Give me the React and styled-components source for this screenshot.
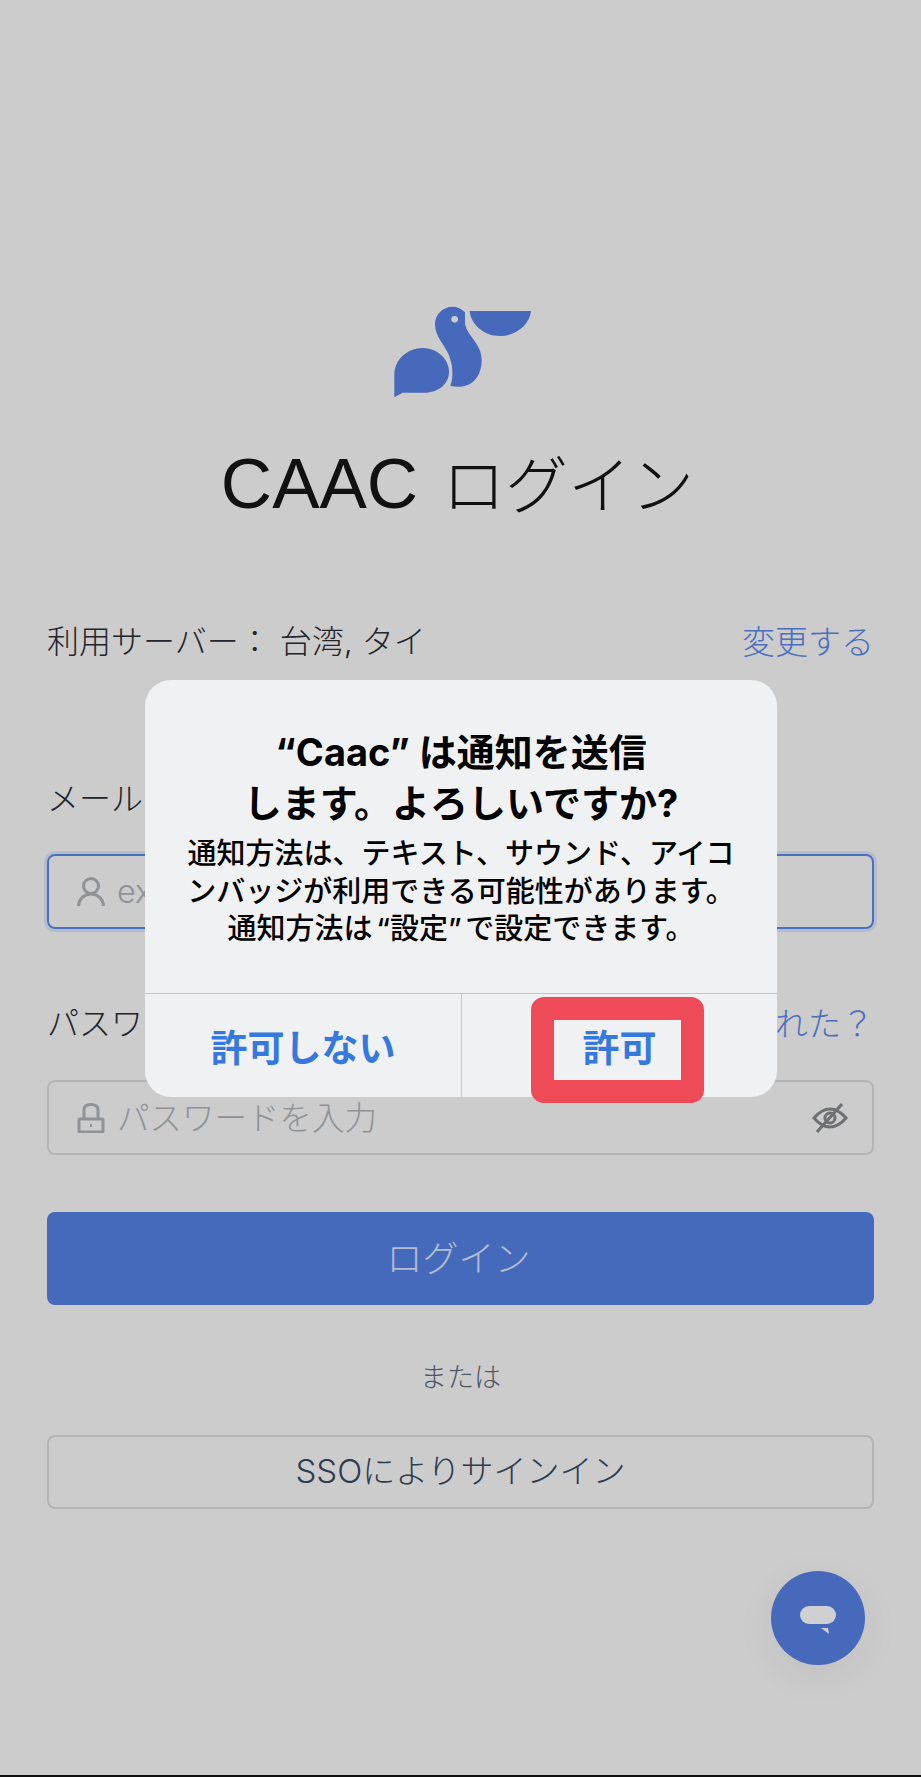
import React from "react";
import styled, { createGlobalStyle } from "styled-components";

const Global = createGlobalStyle`
  html, body { margin: 0; padding: 0; background: #cccccc; }
  * { box-sizing: border-box; }
`;

const sans = `Inter, "Noto Sans CJK JP", sans-serif`;

const Page = styled.main`
  position: relative;
  width: 921px;
  height: 1777px;
  overflow: hidden;
  background: #cccccc;
  border-bottom: 2px solid #111;
  padding: 307px 47px 0;
  font-family: ${sans};
  color: #22252b;
  display: flex;
  flex-direction: column;
`;

const Logo = styled.svg`
  width: 200px;
  height: 130px;
  align-self: center;
  margin: -27px 0 0 0;
  flex: none;
`;

const Title = styled.h1`
  margin: 38px 0 1px;
  padding-right: 6px;
  display: flex;
  justify-content: center;
  align-items: baseline;
  gap: 24px;
  height: 72px;
  font-size: 63px;
  line-height: 72px;
  font-weight: 300;
  color: #111;
  white-space: nowrap;
`;

const TitleLatin = styled.span`
  font-family: "Liberation Sans", sans-serif;
  font-size: 71px;
  font-weight: 400;
`;

const Row = styled.div`
  display: flex;
  justify-content: space-between;
  align-items: center;
  height: 44px;
  font-size: 32px;
  line-height: 44px;
  font-weight: 300;
  margin-top: ${(p) => p.$top}px;
  white-space: nowrap;
`;

const Link = styled.span`
  color: #4a6fbd;
  font-size: 33px;
`;

const Field = styled.div`
  height: 75px;
  margin-top: ${(p) => p.$top}px;
  border-radius: 8px;
  border: ${(p) => (p.$focus ? "2px solid #4a70c4" : "2px solid #b4b5b7")};
  box-shadow: ${(p) => (p.$focus ? "0 0 0 3px #b6bccb" : "none")};
  display: flex;
  align-items: center;
  padding: 0 24px 0 28px;
  gap: 12px;
  font-size: 32.5px;
  font-weight: 300;
  color: #8f9398;
`;

const FieldIcon = styled.svg`
  width: 28px;
  height: 30px;
  flex: none;
  fill: none;
  stroke: #8f9296;
  stroke-width: 3;
`;

const FieldText = styled.span`
  flex: 1;
  white-space: nowrap;
  margin-bottom: ${(p) => p.$raise || 0}px;
`;

const EyeIcon = styled.svg`
  width: 36px;
  height: 36px;
  flex: none;
  fill: none;
  stroke: #6e7073;
  stroke-width: 3;
`;

const Primary = styled.div`
  height: 93px;
  margin-top: 57px;
  padding: 0 4px 6px 0;
  border-radius: 8px;
  background: #466abb;
  color: #b3bcd0;
  font-size: 36px;
  font-weight: 300;
  display: flex;
  align-items: center;
  justify-content: center;
`;

const Or = styled.div`
  margin-top: 55px;
  height: 36px;
  line-height: 36px;
  text-align: center;
  font-size: 27px;
  font-weight: 300;
  color: #4b5563;
`;

const Outline = styled.div`
  height: 74px;
  margin-top: 39px;
  padding-bottom: 7px;
  border-radius: 8px;
  border: 2px solid #b4b5b7;
  color: #2f3b4f;
  font-size: 33px;
  font-weight: 300;
  display: flex;
  align-items: center;
  justify-content: center;
`;

const Fab = styled.div`
  position: absolute;
  left: 771px;
  top: 1571px;
  width: 94px;
  height: 94px;
  border-radius: 50%;
  background: #4669bb;
  box-shadow: 0 10px 40px rgba(0, 0, 0, 0.06);
  display: flex;
  align-items: center;
  justify-content: center;
  padding-top: 6px;
`;

const Dialog = styled.section`
  position: absolute;
  left: 145px;
  top: 680px;
  width: 632px;
  height: 417px;
  border-radius: 26px;
  background: #f0f1f2;
  display: flex;
  flex-direction: column;
  color: #000;
`;

const DialogText = styled.div`
  height: 314px;
  padding-top: 47px;
  text-align: center;
  border-bottom: 1px solid #c4c5c8;
`;

const DialogTitle = styled.h2`
  margin: 0;
  font-size: 38px;
  line-height: 51px;
  font-weight: 700;
`;

const DialogBody = styled.p`
  margin: 6px 0 0;
  font-size: 29px;
  line-height: 37.5px;
  font-weight: 500;
  word-spacing: -4px;
  white-space: nowrap;
`;

const Actions = styled.div`
  flex: 1;
  display: grid;
  grid-template-columns: 316px 1fr;
`;

const Action = styled.div`
  display: flex;
  align-items: center;
  justify-content: center;
  color: #3478e0;
  font-size: 37px;
  font-weight: 600;
  & + & {
    border-left: 1px solid #c9cacd;
  }
`;

const Highlight = styled.div`
  position: absolute;
  left: 386px;
  top: 317px;
  width: 173px;
  height: 106px;
  border: solid #ee4a58;
  border-width: 23px;
  border-radius: 13px;
`;

export default function App() {
  return (
    <>
      <Global />
      <Page>
        <Logo viewBox="0 0 600 390" aria-label="Caac logo">
          <g fill="#4669bb">
            <path d="M100 352 L100 285 C100 238 140 204 185 204 C230 204 264 238 264 275 C264 312 232 338 190 338 L125 338 Z" />
            <path d="M275 80 C245 80 222 104 222 132 C222 170 250 192 264 226 C276 258 278 292 268 318 C280 320 290 321 300 320 C338 317 362 285 362 240 C362 190 318 170 312 130 L312 97 C302 86 288 80 275 80 Z" />
            <path d="M326 93 L510 93 C505 135 465 168 415 168 C370 168 330 135 326 93 Z" />
          </g>
          <circle cx="281" cy="118" r="10" fill="#cccccc" />
        </Logo>
        <Title>
          <TitleLatin>CAAC</TitleLatin>
          <span>ログイン</span>
        </Title>

        <Row $top={99}>
          <span>利用サーバー： 台湾, タイ</span>
          <Link>変更する</Link>
        </Row>

        <Row $top={113}>
          <span>メールアドレス</span>
        </Row>
        <Field $top={33} $focus>
          <FieldIcon viewBox="0 0 28 30">
            <circle cx="14" cy="9" r="7.5" />
            <path d="M1.5 29 C2 22 7 17 14 17 C21 17 26 22 26.5 29" />
          </FieldIcon>
          <FieldText>example@email.com</FieldText>
        </Field>

        <Row $top={73}>
          <span>パスワード</span>
          <Link>パスワードを忘れた？</Link>
        </Row>
        <Field $top={34}>
          <FieldIcon viewBox="0 0 28 30">
            <rect x="2" y="16" width="24" height="13" rx="1" />
            <path d="M7 16 V7 C7 3 10 1.5 14 1.5 C18 1.5 21 3 21 7 V16" />
            <path d="M14 21 V24" strokeWidth="2" />
          </FieldIcon>
          <FieldText $raise={5}>パスワードを入力</FieldText>
          <EyeIcon viewBox="0 0 36 36">
            <path d="M2 18 C8 11 13 9 18 9 C23 9 28 11 34 18 C28 25 23 27 18 27 C13 27 8 25 2 18 Z" />
            <circle cx="18" cy="18" r="5" />
            <path d="M5 32 L30 4" />
          </EyeIcon>
        </Field>

        <Primary>ログイン</Primary>
        <Or>または</Or>
        <Outline>SSOによりサインイン</Outline>

        <Fab>
          <svg width="36" height="30" viewBox="0 0 36 30">
            <rect x="0" y="0" width="36" height="18" rx="9" fill="#cfd0d2" />
            <path d="M21 22 L28 22 L29 28 Z" fill="#cfd0d2" />
          </svg>
        </Fab>

        <Dialog role="dialog">
          <DialogText>
            <DialogTitle>
              “Caac” は通知を送信
              <br />
              します。よろしいですか?
            </DialogTitle>
            <DialogBody>
              通知方法は、テキスト、サウンド、アイコ
              <br />
              ンバッジが利用できる可能性があります。
              <br />
              通知方法は “設定” で設定できます。
            </DialogBody>
          </DialogText>
          <Actions>
            <Action>許可しない</Action>
            <Action>許可</Action>
          </Actions>
          <Highlight />
        </Dialog>
      </Page>
    </>
  );
}
